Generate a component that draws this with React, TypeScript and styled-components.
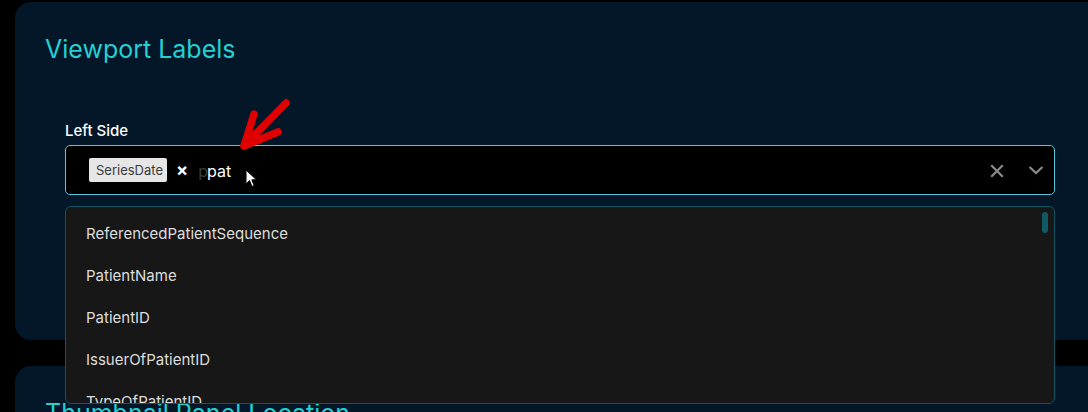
import React from 'react'
import styled, { createGlobalStyle } from 'styled-components'

const GlobalStyle = createGlobalStyle`
  html, body {
    margin: 0;
    padding: 0;
    background: #000;
    overflow: hidden;
  }
  body {
    font-family: Inter, "Noto Sans", "Liberation Sans", sans-serif;
  }
`

const options = [
  'ReferencedPatientSequence',
  'PatientName',
  'PatientID',
  'IssuerOfPatientID',
  'TypeOfPatientID',
]

const App = () => {
  return (
    <>
      <GlobalStyle />
      <StyledPage>
        <StyledCard>
          <StyledHeading>Viewport Labels</StyledHeading>
          <StyledField>
            <StyledLabel>Left Side</StyledLabel>
            <StyledSelect>
              <div className="values">
                <StyledTag>SeriesDate</StyledTag>
                <span className="remove">×</span>
                <StyledSearch>
                  <span className="ghost">p</span>
                  <span className="typed">pat</span>
                </StyledSearch>
              </div>
              <div className="indicators">
                <svg width="14" height="14" viewBox="0 0 14 14">
                  <path d="M2 2 L12 12 M12 2 L2 12" stroke="#8a8a8a" strokeWidth="2.2" strokeLinecap="square" />
                </svg>
                <svg width="16" height="10" viewBox="0 0 16 10">
                  <path d="M1.5 2 L8 8 L14.5 2" stroke="#8a8a8a" strokeWidth="2.2" fill="none" />
                </svg>
              </div>
            </StyledSelect>
            <StyledMenu>
              {options.map(o => (
                <StyledOption key={o}>{o}</StyledOption>
              ))}
              <StyledThumb />
            </StyledMenu>
            {/* annotation arrow */}
            <StyledArrow width="60" height="60" viewBox="0 0 60 60">
              <path
                d="M46 4 L4 47 M4 47 L14 15 M4 47 L38 33"
                stroke="#e00000"
                strokeWidth="7.5"
                strokeLinecap="round"
                strokeLinejoin="round"
                fill="none"
              />
            </StyledArrow>
            <StyledCursor width="14" height="20" viewBox="0 0 14 20">
              <path d="M1 1 L1 15 L4.5 11.5 L7 17.5 L9.2 16.6 L6.8 10.8 L11.5 10.8 Z" fill="#fff" stroke="#000" strokeWidth="1" />
            </StyledCursor>
          </StyledField>
        </StyledCard>
        <StyledCard>
          <StyledHeading>Thumbnail Panel Location</StyledHeading>
        </StyledCard>
      </StyledPage>
    </>
  )
}

export default App

const StyledPage = styled.div`
  padding: 2px 0 0 15px;
  display: flex;
  flex-direction: column;
  gap: 26px;
  width: 1090px;
  box-sizing: border-box;
`

const StyledCard = styled.section`
  background: #041728;
  border-radius: 16px 0 0 16px;
  padding: 32px 30px 0 30px;
  min-height: 338px;
  box-sizing: border-box;
`

const StyledHeading = styled.h2`
  margin: 0;
  color: #24d0d4;
  font-size: 25px;
  font-weight: 400;
  line-height: 30px;
`

const StyledField = styled.div`
  position: relative;
  margin: 58px 0 0 20px;
  width: 990px;
`

const StyledLabel = styled.div`
  color: #fff;
  font-size: 15px;
  font-weight: 500;
  line-height: 18px;
  margin-bottom: 5px;
`

const StyledSelect = styled.div`
  height: 50px;
  box-sizing: border-box;
  background: #000;
  border: 1px solid #5cc6df;
  border-radius: 5px;
  display: flex;
  align-items: center;
  justify-content: space-between;
  padding: 0 10px 0 23px;

  .values {
    display: flex;
    align-items: center;
  }
  .remove {
    color: #fff;
    font-size: 18px;
    font-weight: 700;
    margin: 0 10px 2px 9px;
  }
  .indicators {
    display: flex;
    align-items: center;
    gap: 24px;
    svg:first-child {
      margin-top: 1px;
    }
  }
`

const StyledTag = styled.span`
  background: #e6e6e6;
  color: #3a3a3a;
  font-size: 13px;
  line-height: 24px;
  height: 24px;
  padding: 0 4px 0 7px;
  border-radius: 2px;
`

const StyledSearch = styled.span`
  font-size: 16px;
  line-height: 20px;
  margin-top: 2px;
  .ghost {
    color: #3c3c3c;
  }
  .typed {
    color: #fff;
    margin-left: -1px;
  }
`

const StyledMenu = styled.div`
  position: absolute;
  left: 0;
  right: 0;
  top: 84px;
  height: 198px;
  overflow: hidden;
  background: #171717;
  border: 1px solid #0f5562;
  border-radius: 6px;
  padding-top: 5px;
  box-sizing: border-box;
`

const StyledOption = styled.div`
  height: 42px;
  display: flex;
  align-items: center;
  padding-left: 20px;
  color: #dedede;
  font-size: 15px;
`

const StyledThumb = styled.div`
  position: absolute;
  right: 6px;
  top: 5px;
  width: 6px;
  height: 21px;
  border-radius: 3px;
  background: #0f5a63;
`

const StyledArrow = styled.svg`
  position: absolute;
  left: 175px;
  top: -23px;
  overflow: visible;
`

const StyledCursor = styled.svg`
  position: absolute;
  left: 180px;
  top: 47px;
`
